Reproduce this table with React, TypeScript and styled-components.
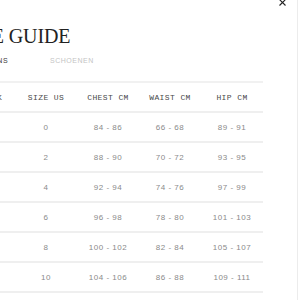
import styled, { createGlobalStyle } from "styled-components";

const GlobalStyle = createGlobalStyle`
  html, body {
    margin: 0;
    padding: 0;
    background: #ffffff;
    overflow: hidden;
  }
`;

const Page = styled.div`
  width: 300px;
  height: 300px;
  overflow: hidden;
  position: relative;
`;

const Modal = styled.div`
  position: relative;
  margin-left: -48px;
  width: 346px;
  height: 300px;
  border-right: 1px solid #ececec;
  box-sizing: border-box;
`;

const CloseButton = styled.button`
  position: absolute;
  top: -3px;
  right: 10px;
  width: 10px;
  height: 10px;
  padding: 0;
  border: none;
  background: transparent;
  display: flex;
  align-items: center;
  justify-content: center;
  cursor: pointer;
`;

const Title = styled.h2`
  margin: 0;
  padding: 24px 0 0 10px;
  font-family: "Liberation Serif", "DejaVu Serif", serif;
  font-weight: 400;
  font-size: 20px;
  line-height: 24px;
  color: #222222;
  letter-spacing: -0.1px;
`;

const Tabs = styled.div`
  display: flex;
  gap: 42px;
  padding: 8px 0 0 31px;
  height: 14px;
`;

const Tab = styled.span<{ $active?: boolean }>`
  font-family: "Liberation Sans", Arial, sans-serif;
  font-size: 7px;
  line-height: 10px;
  letter-spacing: 0.5px;
  text-transform: uppercase;
  color: ${(p) => (p.$active ? "#3a3a3a" : "#c4c4c4")};
`;

const Table = styled.div`
  margin: 11px 0 0 1px;
  width: 310px;
  border-top: 2px solid #f1f1f1;
`;

const Row = styled.div`
  display: grid;
  grid-template-columns: repeat(5, 62px);
  height: 28px;
  align-items: center;
  border-bottom: 2px solid #efefef;
`;

const HeadCell = styled.div`
  text-align: center;
  font-family: "Liberation Mono", "DejaVu Sans Mono", monospace;
  font-size: 8px;
  letter-spacing: 0.4px;
  color: #4a4a4a;
`;

const Cell = styled.div`
  text-align: center;
  font-family: "Liberation Sans", Arial, sans-serif;
  font-size: 8px;
  letter-spacing: 0.5px;
  color: #8a8a8a;
`;

const headers = ["Size UK", "Size US", "Chest cm", "Waist cm", "Hip cm"];

const rows = [
  ["4", "0", "84 - 86", "66 - 68", "89 - 91"],
  ["6", "2", "88 - 90", "70 - 72", "93 - 95"],
  ["8", "4", "92 - 94", "74 - 76", "97 - 99"],
  ["10", "6", "96 - 98", "78 - 80", "101 - 103"],
  ["12", "8", "100 - 102", "82 - 84", "105 - 107"],
  ["14", "10", "104 - 106", "86 - 88", "109 - 111"],
];

function App() {
  return (
    <Page>
      <GlobalStyle />
      <Modal>
        <CloseButton aria-label="Sluiten">
          <svg width="7" height="7" viewBox="0 0 7 7">
            <path d="M0.5 0.5 L6.5 6.5 M6.5 0.5 L0.5 6.5" stroke="#222" strokeWidth="1.1" />
          </svg>
        </CloseButton>
        <Title>SIZE GUIDE</Title>
        <Tabs>
          <Tab $active>Jeans</Tab>
          <Tab>Schoenen</Tab>
        </Tabs>
        <Table>
          <Row>
            {headers.map((h) => (
              <HeadCell key={h}>{h.toUpperCase()}</HeadCell>
            ))}
          </Row>
          {rows.map((r) => (
            <Row key={r[1]}>
              {r.map((c, i) => (
                <Cell key={i}>{c}</Cell>
              ))}
            </Row>
          ))}
        </Table>
      </Modal>
    </Page>
  );
}

export default App;
